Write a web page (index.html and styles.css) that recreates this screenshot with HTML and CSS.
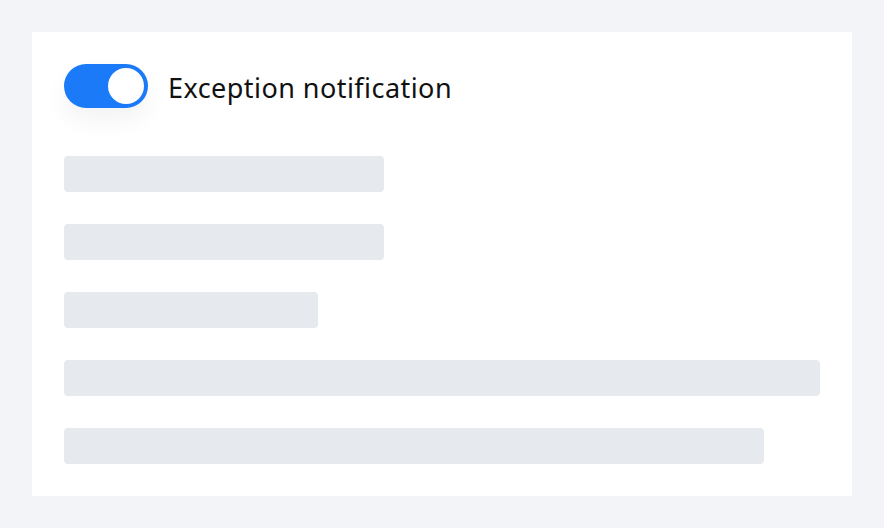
FILE: index.html
```html
<!DOCTYPE html>
<html lang="en">
<head>
<meta charset="UTF-8">
<meta name="viewport" content="width=device-width, initial-scale=1.0">
<title>Exception notification</title>
<link rel="stylesheet" href="styles.css">
</head>
<body>
<div class="card">
    <div class="setting">
        <button class="switch on" type="button" aria-pressed="true"><span class="knob"></span></button>
        <span class="label">Exception notification</span>
    </div>

    <div class="skeleton">
        <div class="line w-320"></div>
        <div class="line w-320"></div>
        <div class="line w-254"></div>
        <div class="line w-full"></div>
        <div class="line w-700"></div>
    </div>
</div>
</body>
</html>
```

FILE: styles.css
```css
body {
    margin: 0;
    padding: 32px;
    background-color: #f3f4f8;
    font-family: "Noto Sans", "Liberation Sans", Arial, sans-serif;
}

.card {
    width: 820px;
    height: 464px;
    box-sizing: border-box;
    padding: 32px;
    background-color: white;
}

.setting {
    display: flex;
    align-items: center;
    gap: 20px;
    height: 44px;
}

.switch {
    display: flex;
    align-items: center;
    justify-content: flex-end;
    width: 84px;
    height: 44px;
    padding: 4px;
    border: none;
    border-radius: 22px;
    background-color: #1a7af8;
    box-shadow: 0 12px 24px rgba(0, 0, 0, 0.05);
    cursor: pointer;
    box-sizing: border-box;
}

.knob {
    width: 36px;
    height: 36px;
    border-radius: 50%;
    background-color: white;
}

.label {
    padding-top: 3px;
    font-size: 27px;
    color: #111;
    letter-spacing: 0.45px;
}

.skeleton {
    display: flex;
    flex-direction: column;
    gap: 32px;
    margin-top: 48px;
}

.line {
    height: 36px;
    border-radius: 4px;
    background-color: #e6e9ee;
}

.w-320 { width: 320px; }
.w-254 { width: 254px; }
.w-700 { width: 700px; }
.w-full { width: 100%; }
```
